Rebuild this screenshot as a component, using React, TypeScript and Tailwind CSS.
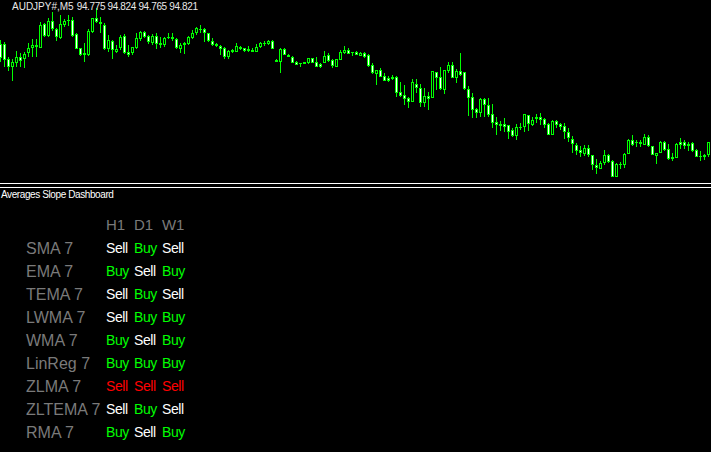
// Chart candles are read from the screenshot: [high, bodyTop, bodyBottom, low, filled]
type Candle = [number, number, number, number, number];

const raw: { y0: number; rows: Candle[] }[] = [
  {
    y0: 0,
    rows: [
      [120, 132, 175, 185, 1], [125, 132, 180, 200, 1], [170, 178, 200, 212, 1], [178, 187, 200, 242, 0],
      [153, 172, 190, 200, 0], [160, 172, 182, 200, 1], [155, 162, 178, 203, 0], [128, 145, 160, 170, 0],
      [118, 135, 145, 172, 0], [118, 135, 140, 170, 0], [65, 76, 143, 143, 0], [70, 73, 107, 110, 1],
      [55, 64, 107, 110, 0], [35, 64, 88, 92, 1], [85, 88, 110, 122, 1], [45, 72, 113, 118, 0],
      [58, 64, 74, 82, 0], [45, 60, 64, 78, 0], [50, 61, 107, 110, 1], [98, 103, 146, 148, 1],
      [143, 145, 165, 168, 1], [130, 160, 165, 185, 0], [88, 94, 165, 167, 0], [55, 55, 96, 100, 0],
      [25, 55, 65, 68, 1], [50, 65, 73, 100, 1], [70, 76, 147, 150, 1], [105, 120, 147, 155, 0],
      [120, 122, 150, 177, 1], [135, 148, 155, 160, 0], [105, 110, 145, 150, 0], [102, 108, 158, 162, 1],
      [135, 157, 165, 170, 1], [140, 142, 160, 165, 0], [100, 115, 144, 147, 0], [92, 96, 116, 122, 0],
      [93, 97, 110, 115, 1], [105, 108, 127, 132, 1], [102, 108, 130, 135, 0], [100, 108, 132, 147, 1],
      [112, 129, 134, 143, 0], [110, 115, 136, 140, 0], [100, 112, 115, 118, 0], [100, 112, 118, 122, 1],
      [115, 118, 145, 147, 1], [128, 135, 147, 158, 0], [125, 130, 136, 162, 0], [108, 112, 132, 135, 0],
      [90, 100, 114, 118, 0], [80, 85, 100, 105, 0], [75, 87, 90, 100, 0], [85, 88, 100, 125, 1],
      [98, 100, 122, 125, 1], [115, 123, 135, 137, 1], [128, 131, 137, 140, 1], [135, 137, 147, 165, 1],
      [140, 143, 172, 178, 1], [150, 152, 172, 177, 0], [147, 150, 155, 160, 0], [130, 138, 155, 157, 0],
    ],
  },
  {
    y0: 20,
    rows: [
      [78, 82, 88, 90, 0], [83, 85, 92, 95, 1], [78, 88, 92, 95, 0], [84, 90, 95, 96, 0],
      [72, 82, 95, 95, 0], [65, 69, 80, 83, 0], [63, 69, 72, 78, 0], [60, 63, 72, 75, 0],
      [60, 63, 87, 87, 1], [117, 120, 126, 126, 0], [85, 88, 125, 158, 0], [84, 88, 104, 105, 1],
      [102, 105, 110, 110, 0], [108, 110, 128, 130, 1], [123, 126, 134, 136, 1], [128, 129, 133, 140, 0],
      [126, 126, 131, 132, 0], [114, 114, 129, 132, 0], [113, 115, 128, 130, 1], [110, 127, 140, 142, 1],
      [128, 132, 142, 144, 1], [93, 108, 128, 129, 0], [100, 105, 122, 125, 1], [118, 121, 138, 143, 1],
      [118, 118, 140, 140, 0], [90, 97, 119, 120, 0], [78, 90, 99, 102, 0], [84, 90, 101, 102, 1],
      [96, 97, 100, 107, 0], [94, 97, 104, 106, 1], [96, 100, 107, 108, 0], [96, 100, 112, 114, 1],
      [102, 106, 137, 140, 1], [130, 136, 160, 162, 1], [150, 151, 161, 195, 0], [145, 151, 170, 172, 1],
      [158, 169, 182, 184, 1], [167, 175, 184, 187, 1], [166, 171, 176, 180, 0], [168, 172, 218, 230, 1],
      [186, 217, 227, 232, 1], [195, 226, 236, 255, 1], [230, 235, 245, 263, 1], [178, 187, 245, 245, 0],
      [178, 193, 204, 220, 1], [193, 205, 248, 262, 1], [205, 229, 248, 262, 0], [216, 229, 236, 270, 1],
      [153, 153, 233, 233, 0], [155, 157, 173, 210, 1], [140, 172, 206, 210, 1], [150, 151, 209, 222, 0],
      [126, 135, 153, 158, 0], [126, 136, 173, 175, 1], [148, 154, 174, 190, 0], [98, 154, 165, 168, 1],
      [156, 157, 208, 210, 1], [198, 208, 233, 288, 1],
    ],
  },
  {
    y0: 80,
    rows: [
      [40, 52, 90, 113, 1], [85, 88, 100, 113, 1], [55, 57, 98, 112, 0], [55, 58, 75, 112, 1],
      [55, 76, 104, 112, 1], [72, 102, 128, 145, 1], [110, 126, 135, 165, 1], [123, 132, 137, 153, 0],
      [113, 132, 140, 155, 1], [135, 135, 155, 177, 1], [145, 151, 167, 170, 1], [132, 141, 167, 180, 0],
      [128, 141, 144, 150, 0], [102, 103, 142, 155, 0], [105, 106, 131, 153, 1], [112, 120, 134, 137, 0],
      [102, 112, 118, 130, 0], [100, 112, 119, 135, 1], [115, 118, 134, 145, 1], [130, 132, 164, 165, 1],
      [120, 123, 164, 165, 0], [120, 124, 136, 145, 1], [128, 133, 140, 150, 1], [130, 139, 157, 178, 1],
      [145, 157, 175, 185, 1], [168, 178, 193, 218, 1], [190, 194, 212, 225, 1], [197, 211, 220, 230, 1],
      [195, 205, 221, 228, 0], [195, 205, 225, 230, 1], [225, 226, 254, 270, 1], [237, 256, 265, 282, 1],
      [242, 250, 266, 266, 0], [210, 226, 250, 255, 0], [222, 224, 245, 248, 1], [240, 243, 290, 290, 1],
      [250, 252, 290, 290, 0], [247, 252, 255, 266, 0], [220, 221, 254, 265, 0], [178, 181, 221, 222, 0],
      [165, 181, 194, 197, 1], [180, 186, 190, 200, 0], [181, 186, 193, 200, 1], [163, 172, 194, 195, 0],
      [165, 172, 199, 200, 1], [197, 199, 224, 225, 1], [220, 220, 227, 252, 0], [182, 187, 218, 220, 0],
      [183, 187, 209, 212, 1], [192, 208, 236, 240, 1], [220, 232, 236, 243, 0], [190, 193, 233, 235, 0],
      [175, 186, 195, 207, 1], [180, 186, 197, 207, 1], [187, 193, 197, 213, 0], [187, 190, 212, 215, 1],
      [208, 211, 230, 232, 1], [213, 229, 232, 242, 0], [222, 226, 230, 240, 0], [185, 187, 224, 230, 0],
    ],
  },
];

const candles = raw.flatMap((s) =>
  s.rows.map((c) => ({
    high: Math.round(s.y0 + c[0] / 3),
    top: Math.round(s.y0 + c[1] / 3),
    bottom: Math.round(s.y0 + c[2] / 3),
    low: Math.round(s.y0 + c[3] / 3),
    filled: c[4] === 1,
  })),
);

function Chart() {
  return (
    <svg width="711" height="183" shapeRendering="crispEdges" className="block">
      {candles.map((c, i) => {
        const x = i * 4;
        const h = Math.max(c.bottom - c.top, 1);
        return (
          <g key={i}>
            <rect x={x} y={c.high} width="1" height={Math.max(c.low - c.high, 1)} fill="#00ff00" />
            <rect x={x - 1} y={c.top} width="3" height={h} fill="#00ff00" />
            {h > 2 && (
              <rect x={x} y={c.top + 1} width="1" height={h - 2} fill={c.filled ? "#ffffff" : "#000000"} />
            )}
          </g>
        );
      })}
    </svg>
  );
}

type Signal = "Sell" | "Buy" | "Down";

const rows: { label: string; cells: Signal[] }[] = [
  { label: "SMA 7", cells: ["Sell", "Buy", "Sell"] },
  { label: "EMA 7", cells: ["Buy", "Sell", "Buy"] },
  { label: "TEMA 7", cells: ["Sell", "Buy", "Sell"] },
  { label: "LWMA 7", cells: ["Sell", "Buy", "Buy"] },
  { label: "WMA 7", cells: ["Buy", "Sell", "Buy"] },
  { label: "LinReg 7", cells: ["Buy", "Buy", "Buy"] },
  { label: "ZLMA 7", cells: ["Down", "Down", "Down"] },
  { label: "ZLTEMA 7", cells: ["Sell", "Buy", "Sell"] },
  { label: "RMA 7", cells: ["Buy", "Sell", "Buy"] },
];

function Cell({ value }: { value: Signal }) {
  if (value === "Buy") return <span className="w-7 text-[#00ff00]">Buy</span>;
  if (value === "Down") return <span className="w-7 text-[#ff0000]">Sell</span>;
  return <span className="w-7 text-[#ffffff]">Sell</span>;
}

export default function App() {
  return (
    <div className="relative flex h-[452px] w-[711px] flex-col overflow-hidden bg-black font-['Liberation_Sans',sans-serif]">
      <div className="absolute left-[12px] top-px whitespace-pre text-[10px] leading-[11px] text-[#e8e8e8]">
        <span>AUDJPY#,M5</span>
        <span className="ml-[3px] tracking-[-0.36px]">94.775 94.824 94.765 94.821</span>
      </div>
      <Chart />
      <div className="flex h-[5px] flex-col justify-between">
        <div className="h-px bg-white" />
        <div className="h-px bg-white" />
      </div>
      <div className="pl-px pt-px text-[10px] leading-[12px] tracking-[-0.4px] text-white">
        Averages Slope Dashboard
      </div>
      <div className="flex flex-col pl-[26px] pt-[13px]">
        <div className="flex h-[23px] items-center pl-[80px] text-[15px] tracking-[-0.2px] text-[#7a7a7a]">
          <span className="w-7">H1</span>
          <span className="w-7">D1</span>
          <span className="w-7">W1</span>
        </div>
        {rows.map((r) => (
          <div key={r.label} className="flex h-[23px] items-center">
            <span className="w-[80px] text-[16px] text-[#7a7a7a]">{r.label}</span>
            <div className="flex text-[14px] tracking-[-0.4px]">
              {r.cells.map((v, i) => (
                <Cell key={i} value={v} />
              ))}
            </div>
          </div>
        ))}
      </div>
    </div>
  );
}
